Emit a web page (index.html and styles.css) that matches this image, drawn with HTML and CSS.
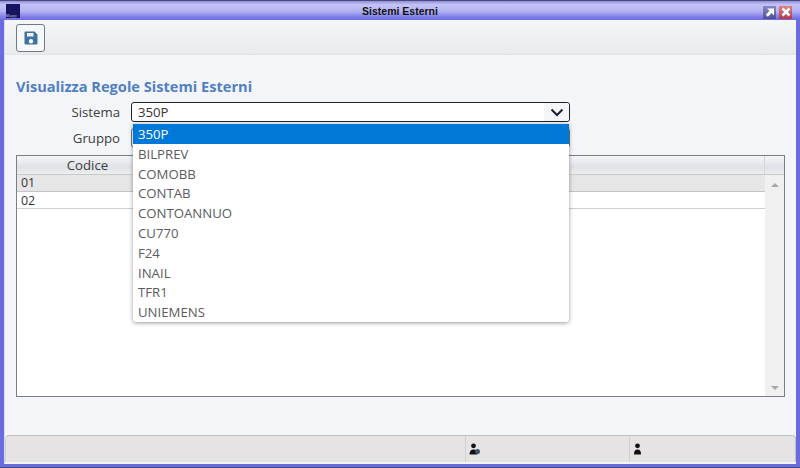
FILE: index.html
```html
<!DOCTYPE html>
<html lang="en">
<head>
    <meta charset="UTF-8">
    <meta name="viewport" content="width=device-width, initial-scale=1.0">
    <title>Sistemi Esterni</title>
    <link rel="stylesheet" href="styles.css">
</head>
<body>
    <div class="window">
        <div class="titlebar">
            <div class="app-icon"><span class="app-icon-text">Mapp</span></div>
            <div class="title">Sistemi Esterni</div>
            <div class="win-buttons">
                <div class="win-btn win-max">
                    <svg width="12" height="12" viewBox="0 0 12 12"><path d="M3 2.500h7v7l-2.200-2.400-4 3.600-2-2 3.800-3.900z" fill="#fff"/></svg>
                </div>
                <div class="win-btn win-close">
                    <svg width="12" height="12" viewBox="0 0 12 12"><path d="M2.500 2.500l7 7M9.500 2.500l-7 7" stroke="#fff" stroke-width="2.600"/></svg>
                </div>
            </div>
        </div>

        <div class="client">
            <div class="toolbar">
                <button class="tool-btn">
                    <svg width="14" height="14" viewBox="0 0 14 14"><path fill-rule="evenodd" d="M1.500 0.500h9l3 3v9a1 1 0 0 1-1 1h-11a1 1 0 0 1-1-1v-11a1 1 0 0 1 1-1zM3 2v3.500h6.500V2zM7 8a2.200 2.200 0 1 0 0 4.400A2.200 2.200 0 0 0 7 8z" fill="#3f729f"/></svg>
                </button>
            </div>

            <div class="content">
                <h1 class="page-title">Visualizza Regole Sistemi Esterni</h1>

                <div class="form-row">
                    <label class="form-label">Sistema</label>
                    <div class="select">
                        <span class="select-value">350P</span>
                        <span class="select-arrow">
                            <svg width="14" height="9" viewBox="0 0 14 9"><path d="M1.500 1.500L7 7l5.500-5.500" fill="none" stroke="#15202c" stroke-width="2"/></svg>
                        </span>
                    </div>
                </div>
                <div class="form-row">
                    <label class="form-label">Gruppo</label>
                    <div class="select select-hidden"></div>
                </div>

                <ul class="dropdown">
                    <li class="selected">350P</li>
                    <li>BILPREV</li>
                    <li>COMOBB</li>
                    <li>CONTAB</li>
                    <li>CONTOANNUO</li>
                    <li>CU770</li>
                    <li>F24</li>
                    <li>INAIL</li>
                    <li>TFR1</li>
                    <li>UNIEMENS</li>
                </ul>

                <div class="grid">
                    <div class="grid-head">
                        <div class="head-cell head-code">Codice</div>
                        <div class="head-cell head-rest"></div>
                        <div class="head-cell head-end"></div>
                    </div>
                    <div class="grid-body">
                        <div class="rows">
                            <div class="row row-active">01</div>
                            <div class="row">02</div>
                        </div>
                        <div class="scrollbar">
                            <span class="arrow-up"></span>
                            <span class="arrow-down"></span>
                        </div>
                    </div>
                </div>
            </div>

            <div class="statusbar">
                <div class="status-cell status-main"></div>
                <div class="status-cell status-mid">
                    <svg width="12" height="12" viewBox="0 0 12 12"><circle cx="4.500" cy="2.800" r="2.400" fill="#111"/><path d="M0.500 11.500c0-3.500 1.500-5 4-5s4 1.500 4 5z" fill="#111"/><circle cx="8.500" cy="8.500" r="2.500" fill="#3d4f6b"/></svg>
                </div>
                <div class="status-cell status-end">
                    <svg width="12" height="12" viewBox="0 0 12 12"><circle cx="4.500" cy="2.800" r="2.400" fill="#111"/><path d="M1 11.500c0-3.500 1-5 3.500-5s3.500 1.500 3.500 5z" fill="#111"/></svg>
                </div>
            </div>
        </div>
    </div>
</body>
</html>
```

FILE: styles.css
```css
html, body {
    margin: 0;
    padding: 0;
}
body {
    width: 800px;
    height: 468px;
    overflow: hidden;
    font-family: "Open Sans", sans-serif;
    font-size: 13.2px;
    color: #3c3c3c;
}
.window {
    display: flex;
    flex-direction: column;
    height: 468px;
    box-sizing: border-box;
    background: #6b6be0;
    border-top: 1px solid #4a4a78;
    border-bottom: 1px solid #4a4a78;
    padding: 0 4px 3px 4px;
}
.titlebar {
    display: flex;
    align-items: center;
    height: 19px;
    margin: 0 -4px;
    padding: 0 8px 0 6px;
    flex-shrink: 0;
    background: linear-gradient(#8f8fdc 0, #c4c4f6 20%, #b2b2f2 55%, #8484ea 80%, #6b6be0 100%);
}
.app-icon {
    width: 14px;
    height: 14px;
    background: #14145f;
    position: relative;
    overflow: hidden;
}
.app-icon-text {
    position: absolute;
    left: 0;
    bottom: 0;
    font-size: 4px;
    line-height: 5px;
    color: #cfd2ee;
}
.title {
    flex: 1;
    text-align: center;
    font-family: "Liberation Sans", sans-serif;
    font-size: 10.5px;
    font-weight: bold;
    color: #111;
    padding: 1px 0 0 17px;
}
.win-buttons {
    display: flex;
    gap: 3px;
    margin-top: 3px;
}
.win-btn {
    display: flex;
    align-items: center;
    justify-content: center;
    width: 13px;
    height: 13px;
}
.win-max {
    background: linear-gradient(#8888c0, #4c4f92);
}
.win-close {
    background: linear-gradient(#e08080, #b23a4a);
}
.client {
    flex: 1;
    display: flex;
    flex-direction: column;
    background: #f4f5f8;
    border-left: 1px solid #dcdcf5;
    min-height: 0;
}
.toolbar {
    height: 35px;
    flex-shrink: 0;
    box-sizing: border-box;
    padding: 4px 0 0 11px;
    background: linear-gradient(#f5f6f8, #e9eaec);
    border-bottom: 1px solid #e2e3e5;
}
.tool-btn {
    display: flex;
    align-items: center;
    justify-content: center;
    width: 29px;
    height: 28px;
    padding: 0;
    background: #f6f7f9;
    border: 1px solid #6f7a86;
    border-radius: 3px;
}
.content {
    flex: 1;
    position: relative;
    padding: 0 11px;
    min-height: 0;
}
.page-title {
    margin: 22px 0 0 0;
    font-size: 14.6px;
    line-height: 19px;
    font-weight: bold;
    color: #5080c4;
}
.form-row {
    display: flex;
    align-items: center;
    margin-top: 6px;
    height: 20px;
}
.form-label {
    width: 104px;
    text-align: right;
    margin-right: 11px;
    color: #3c3c3c;
}
.select {
    display: flex;
    width: 439px;
    height: 20px;
    box-sizing: border-box;
    background: #fff;
    border: 1px solid #222;
    border-radius: 3px;
}
.select-hidden {
    border-color: #777;
}
.select-value {
    flex: 1;
    padding-left: 6px;
    line-height: 18px;
    color: #333;
}
.select-arrow {
    display: flex;
    align-items: center;
    justify-content: center;
    width: 25px;
    background: #f4f5f8;
    border-radius: 0 3px 3px 0;
}
.dropdown {
    position: absolute;
    left: 128px;
    top: 69px;
    width: 436px;
    margin: 0;
    padding: 0;
    list-style: none;
    background: #fff;
    border-radius: 0 0 3px 3px;
    box-shadow: 0 1px 4px rgba(0,0,0,0.4);
    z-index: 5;
}
.dropdown li {
    height: 19.8px;
    line-height: 21px;
    padding-left: 5px;
    color: #5a5a60;
}
.dropdown li.selected {
    background: #0078d7;
    color: #fff;
}
.grid {
    margin-top: 7px;
    height: 242px;
    box-sizing: border-box;
    display: flex;
    flex-direction: column;
    background: #fff;
    border: 1px solid #7c7f82;
}
.grid-head {
    display: flex;
    height: 18px;
    flex-shrink: 0;
    background: linear-gradient(#f4f5f7, #dfe2e6 60%, #eceef0);
    border-bottom: 1px solid #c9cacc;
}
.head-cell {
    box-sizing: border-box;
    border-right: 1px solid #d4d6d8;
    line-height: 18px;
    text-align: center;
}
.head-code {
    width: 142px;
}
.head-rest {
    flex: 1;
}
.head-end {
    width: 19px;
    border-right: none;
}
.grid-body {
    flex: 1;
    display: flex;
    min-height: 0;
}
.rows {
    flex: 1;
}
.row {
    height: 16px;
    line-height: 17px;
    padding-left: 4px;
    font-size: 12.4px;
    color: #333;
    border-bottom: 1px solid #d0d0d0;
}
.row-active {
    line-height: 16px;
    background: #e6e6e6;
    border-bottom-color: #c4c4c4;
}
.scrollbar {
    width: 19px;
    display: flex;
    flex-direction: column;
    justify-content: space-between;
    align-items: center;
    box-sizing: border-box;
    padding: 8px 0 6px;
    background: #f0f0f0;
}
.arrow-up {
    border-left: 4px solid transparent;
    border-right: 4px solid transparent;
    border-bottom: 4px solid #a8a8a8;
}
.arrow-down {
    border-left: 4px solid transparent;
    border-right: 4px solid transparent;
    border-top: 4px solid #a8a8a8;
}
.statusbar {
    display: flex;
    height: 26px;
    margin-top: auto;
    flex-shrink: 0;
    background: #e6e3e4;
    border-top: 1px solid #c4c0c0;
    border-left: 1px solid #d0cdcd;
    border-right: 1px solid #c4c0c0;
    border-radius: 4px 4px 0 0;
    margin-bottom: 2px;
}
.status-cell {
    box-sizing: border-box;
    display: flex;
    align-items: center;
    padding-left: 3px;
    border-right: 1px solid #d2cfcf;
}
.status-main {
    width: 460px;
}
.status-mid {
    width: 164px;
}
.status-end {
    flex: 1;
    border-right: none;
}
```
